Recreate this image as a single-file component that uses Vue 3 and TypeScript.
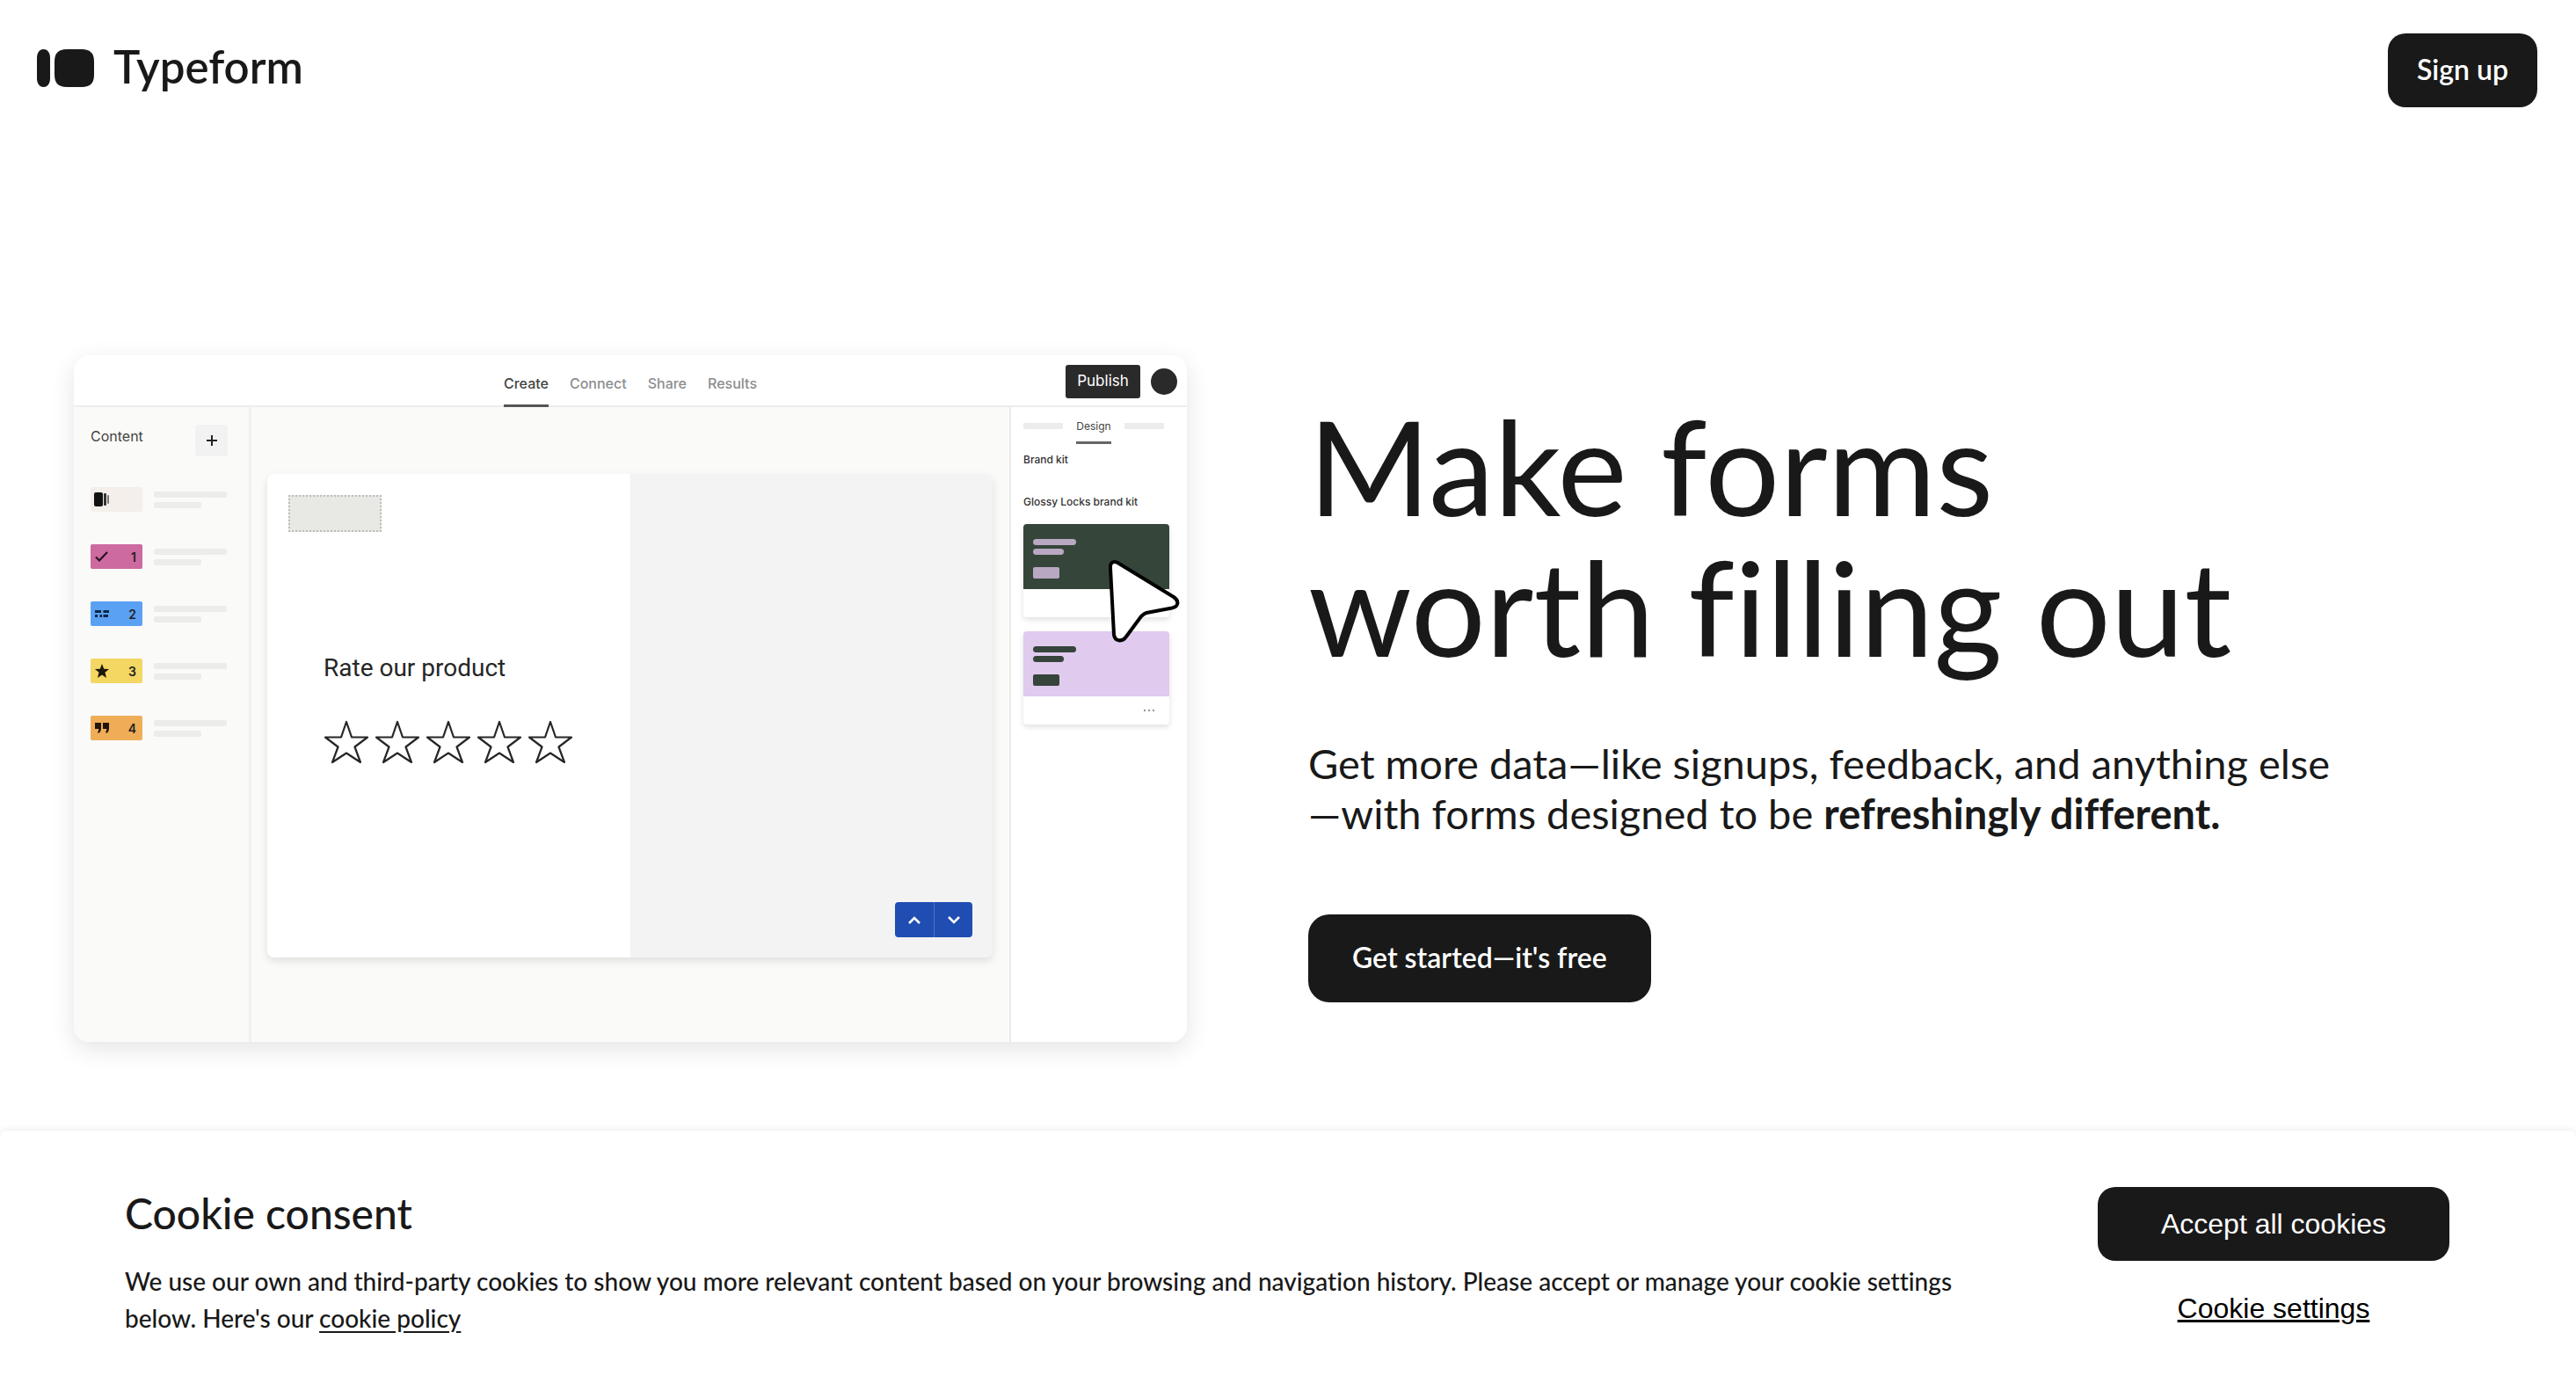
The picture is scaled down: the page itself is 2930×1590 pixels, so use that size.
<script setup lang="ts">
interface Question {
  icon: 'logo' | 'check' | 'text' | 'star' | 'quote'
  color: string
  label: string
}

interface Theme {
  name: string
  menu: boolean
}

const tabs: string[] = ['Create', 'Connect', 'Share', 'Results']

const questions: Question[] = [
  { icon: 'logo', color: '#f4efeb', label: '' },
  { icon: 'check', color: '#cd6a9f', label: '1' },
  { icon: 'text', color: '#5ba1f3', label: '2' },
  { icon: 'star', color: '#f4d662', label: '3' },
  { icon: 'quote', color: '#efad58', label: '4' },
]

const themes: Theme[] = [
  { name: 'forest', menu: false },
  { name: 'lilac', menu: true },
]
</script>

<template>
  <div class="page">
    <header class="topbar">
      <a class="brand" href="#" aria-label="Typeform home">
        <svg class="brand-mark" width="65" height="43" viewBox="0 0 65 43" aria-hidden="true">
          <path d="M7.500 0C12.500 0 15 4.500 15 10V33C15 38.500 12.500 43 7.500 43C2.500 43 0 38.500 0 33V10C0 4.500 2.500 0 7.500 0Z" />
          <path d="M34 0H51C61 0 65 5 65 14V29C65 38 61 43 51 43H34C24 43 20 38 20 29V14C20 5 24 0 34 0Z" />
        </svg>
        <span>Typeform</span>
      </a>
      <button class="btn btn-small" type="button">Sign up</button>
    </header>

    <main class="hero">
      <section class="app" aria-label="Form builder preview">
        <div class="app-head">
          <nav class="tabs">
            <button v-for="(tab, i) in tabs" :key="tab" type="button" class="tab" :class="{ active: i === 0 }">{{ tab }}</button>
          </nav>
          <div class="account">
            <button class="publish" type="button">Publish</button>
            <span class="avatar"></span>
          </div>
        </div>

        <div class="app-body">
          <aside class="sidebar">
            <div class="sidebar-head">
              <span class="sidebar-title">Content</span>
              <button class="add" type="button" aria-label="Add content">
                <svg width="12" height="12" viewBox="0 0 12 12"><path d="M6 0V12M0 6H12" stroke="#222" stroke-width="2" /></svg>
              </button>
            </div>
            <ul class="questions">
              <li v-for="q in questions" :key="q.icon" class="question">
                <span class="tile" :style="{ background: q.color }">
                  <svg width="18" height="18" viewBox="0 0 18 18" aria-hidden="true">
                    <g v-if="q.icon === 'logo'" fill="#111">
                      <rect x="0" y="1" width="10" height="16" rx="2" />
                      <rect x="11" y="2" width="3" height="14" rx="1" fill="#333" />
                      <rect x="15" y="4" width="2" height="10" rx="1" fill="#777" />
                    </g>
                    <path v-else-if="q.icon === 'check'" d="M2 9.500L6 13.500L15 4" fill="none" stroke="#2c0f20" stroke-width="2.200" />
                    <path v-else-if="q.icon === 'text'" d="M1 6.500H8M10.500 6.500H17M1 11.500H4M6.500 11.500H9M10.500 11.500H16" fill="none" stroke="#0d2745" stroke-width="2.800" />
                    <path v-else-if="q.icon === 'star'" d="M9 1L11.200 6.800L17 7L12.500 10.800L14 17L9 13.400L4 17L5.500 10.800L1 7L6.800 6.800Z" fill="#1c180a" />
                    <path v-else d="M1 3H8V9C8 12 7 14 5 15L4 13.500C5 12.500 5.300 11.500 5.300 10H1ZM10 3H17V9C17 12 16 14 14 15L13 13.500C14 12.500 14.300 11.500 14.300 10H10Z" fill="#20150a" />
                  </svg>
                  <b>{{ q.label }}</b>
                </span>
                <span class="lines"><i></i><i></i></span>
              </li>
            </ul>
          </aside>

          <div class="canvas">
            <div class="form">
              <div class="form-main">
                <div class="logo-slot"></div>
                <p class="form-title">Rate our product</p>
                <div class="stars">
                  <svg v-for="n in 5" :key="n" width="52" height="52" viewBox="0 0 52 52" aria-hidden="true">
                    <path d="M26 3L32 20.500H50L35.500 31.500L42 49L26 38.500L10 49L16.500 31.500L2 20.500H20Z" fill="none" stroke="#262626" stroke-width="2.200" stroke-linejoin="round" />
                  </svg>
                </div>
              </div>
              <div class="form-side">
                <div class="pager">
                  <button type="button" aria-label="Previous">
                    <svg width="14" height="9" viewBox="0 0 14 9"><path d="M1 8L7 2L13 8" fill="none" stroke="#fff" stroke-width="2.600" /></svg>
                  </button>
                  <button type="button" aria-label="Next">
                    <svg width="14" height="9" viewBox="0 0 14 9"><path d="M1 1L7 7L13 1" fill="none" stroke="#fff" stroke-width="2.600" /></svg>
                  </button>
                </div>
              </div>
            </div>
          </div>

          <aside class="design">
            <div class="design-tabs">
              <i></i>
              <button type="button">Design</button>
              <i></i>
            </div>
            <p class="kit-label">Brand kit</p>
            <p class="kit-name">Glossy Locks brand kit</p>
            <div v-for="t in themes" :key="t.name" class="theme" :class="t.name">
              <div class="swatch"><i></i><i></i><i></i></div>
              <div class="theme-foot">
                <svg v-if="t.menu" width="14" height="4" viewBox="0 0 14 4" fill="#999"><circle cx="2" cy="2" r="1.200" /><circle cx="7" cy="2" r="1.200" /><circle cx="12" cy="2" r="1.200" /></svg>
              </div>
            </div>
            <svg class="cursor" width="84" height="98" viewBox="0 0 84 98" aria-hidden="true">
              <path d="M5 10C4.500 3 9 1.500 14 4.500L77 43C84 48 82 54 75 55.500L46 61C43 62 42 63 40 65L23 88C18 95 10 93 9 86Z" fill="#fff" stroke="#000" stroke-width="4" stroke-linejoin="round" />
            </svg>
          </aside>
        </div>
      </section>

      <section class="pitch">
        <h1>Make forms<br />worth filling out</h1>
        <p>Get more data—like signups, feedback, and anything else<br />—with forms designed to be <strong>refreshingly different.</strong></p>
        <button class="btn btn-large" type="button">Get started—it's free</button>
      </section>
    </main>

    <section class="consent" aria-label="Cookie consent">
      <div class="consent-text">
        <h2>Cookie consent</h2>
        <p>We use our own and third-party cookies to show you more relevant content based on your browsing and navigation history. Please accept or manage your cookie settings below. Here's our <a href="#">cookie policy</a></p>
      </div>
      <div class="consent-actions">
        <button class="accept" type="button">Accept all cookies</button>
        <button class="settings" type="button">Cookie settings</button>
      </div>
    </section>
  </div>
</template>

<style>
body {
  margin: 0;
  background: #fff;
}
</style>

<style scoped>
* {
  box-sizing: border-box;
}
h1, h2, p, ul {
  margin: 0;
  padding: 0;
}
button {
  border: 0;
  padding: 0;
  background: none;
  font: inherit;
  color: inherit;
  cursor: pointer;
}
svg {
  display: block;
}
.page {
  display: flex;
  flex-direction: column;
  min-height: 100vh;
  font-family: Lato, "Open Sans", sans-serif;
  font-variant-ligatures: none;
  color: #191919;
}
.topbar {
  display: flex;
  justify-content: space-between;
  align-items: flex-start;
  padding: 38px 44px 0 42px;
}
.brand {
  display: flex;
  align-items: center;
  gap: 22px;
  height: 78px;
  color: #191919;
  font-size: 51px;
  font-weight: 600;
  line-height: 60px;
  text-decoration: none;
}
.brand span {
  padding-bottom: 2px;
}
.brand-mark {
  fill: #191919;
}
.btn {
  background: #191919;
  color: #fff;
  font-size: 32px;
  font-weight: 600;
}
.btn-small {
  height: 84px;
  padding: 0 33px 4px;
  border-radius: 20px;
}
.btn-large {
  height: 100px;
  padding: 0 50px 4px;
  border-radius: 24px;
}
.hero {
  display: grid;
  grid-template-columns: 1266fr 1358fr;
  gap: 138px;
  padding: 282px 84px 100px;
}

/* builder window */
.app {
  border-radius: 18px;
  background: #fff;
  box-shadow: 0 8px 28px rgba(0, 0, 0, 0.11);
  font-family: Inter, "Liberation Sans", sans-serif;
}
.app-head {
  display: grid;
  grid-template-columns: 1fr auto 1fr;
  height: 59px;
  border-bottom: 2px solid #ededed;
}
.tabs {
  grid-column: 2;
  display: flex;
  gap: 24px;
}
.tab {
  height: 60px;
  padding-top: 8px;
  border-bottom: 4px solid transparent;
  color: #8d8d8d;
  font-size: 16px;
  font-weight: 500;
}
.tab.active {
  border-color: #555;
  color: #444;
}
.account {
  display: flex;
  justify-content: flex-end;
  align-items: center;
  gap: 12px;
  padding: 0 11px 1px 0;
}
.publish {
  width: 85px;
  height: 38px;
  padding-bottom: 2px;
  border-radius: 3px;
  background: #2a2a2a;
  color: #fff;
  font-size: 17px;
}
.avatar {
  width: 30px;
  height: 30px;
  border-radius: 50%;
  background: #2a2a2a;
}
.app-body {
  display: grid;
  grid-template-columns: 202px 1fr 202px;
  min-height: 722px;
}
.sidebar {
  padding: 20px 24px 0 19px;
  border-right: 3px solid #f0f0ef;
  border-radius: 0 0 0 18px;
  background: #fafaf8;
}
.sidebar-head {
  display: flex;
  justify-content: space-between;
  align-items: flex-start;
}
.sidebar-title {
  padding-top: 4px;
  color: #444;
  font-size: 16px;
  line-height: 18px;
}
.add {
  display: grid;
  place-items: center;
  width: 37px;
  height: 36px;
  border-radius: 4px;
  background: #f2f2f2;
}
.questions {
  display: grid;
  gap: 37px;
  margin-top: 35px;
  list-style: none;
}
.question {
  display: flex;
  gap: 13px;
}
.tile {
  display: flex;
  align-items: center;
  justify-content: space-between;
  width: 59px;
  height: 28px;
  padding: 0 7px 0 4px;
  border-radius: 2px;
}
.tile b {
  color: #222;
  font-size: 14px;
  font-weight: 600;
}
.lines {
  display: grid;
  align-content: center;
  gap: 5px;
}
.lines i {
  width: 83px;
  height: 7px;
  border-radius: 2px;
  background: #ececeb;
}
.lines i + i {
  width: 54px;
}
.canvas {
  display: flex;
  padding: 76px 19px 96px 18px;
  background: #fafaf8;
}
.form {
  display: grid;
  grid-template-columns: 1fr 1fr;
  flex: 1;
  border-radius: 8px;
  box-shadow: 0 4px 10px rgba(0, 0, 0, 0.11);
}
.form-main {
  padding: 24px;
  border-radius: 8px 0 0 8px;
  background: #fff;
}
.logo-slot {
  width: 106px;
  height: 42px;
  border: 2px dotted #bdbdbb;
  background: #e8e8e4;
}
.form-title {
  margin: 137px 0 0 40px;
  color: #262626;
  font-family: Roboto, Inter, sans-serif;
  font-size: 28px;
  line-height: 36px;
}
.stars {
  display: flex;
  gap: 6px;
  margin: 40px 0 0 40px;
}
.form-side {
  display: flex;
  justify-content: flex-end;
  align-items: flex-end;
  padding: 23px;
  border-radius: 0 8px 8px 0;
  background: #f3f3f3;
}
.pager {
  display: flex;
  border-radius: 4px;
  background: #1f4db2;
}
.pager button {
  display: grid;
  place-items: center;
  width: 44px;
  height: 40px;
}
.pager button + button {
  border-left: 1px solid #4a72c9;
}
.design {
  position: relative;
  padding: 14px 20px 0 14px;
  border-left: 2px solid #ececec;
  border-radius: 0 0 18px 0;
  background: #fff;
}
.design-tabs {
  display: flex;
  justify-content: space-between;
  padding-right: 6px;
}
.design-tabs i {
  width: 45px;
  height: 7px;
  margin-top: 4px;
  background: #ececec;
}
.design-tabs button {
  height: 28px;
  padding-bottom: 10px;
  border-bottom: 3px solid #666;
  color: #444;
  font-size: 12px;
  line-height: 15px;
}
.kit-label,
.kit-name {
  color: #333;
  font-size: 12px;
  font-weight: 500;
  line-height: 16px;
  white-space: nowrap;
}
.kit-label {
  margin-top: 10px;
}
.kit-name {
  margin: 32px 0 17px;
}
.theme {
  margin-bottom: 16px;
  border-radius: 4px;
  box-shadow: 0 3px 6px rgba(0, 0, 0, 0.12);
}
.swatch {
  display: grid;
  align-content: start;
  gap: 4px;
  height: 74px;
  padding: 17px 11px;
  border-radius: 4px 4px 0 0;
}
.swatch i {
  width: 49px;
  height: 7px;
  border-radius: 4px;
}
.swatch i:nth-child(2) {
  width: 35px;
}
.swatch i:nth-child(3) {
  width: 30px;
  height: 13px;
  margin-top: 10px;
  border-radius: 2px;
}
.forest .swatch {
  background: #354539;
}
.forest i {
  background: #b8a8c2;
}
.lilac .swatch {
  background: #e0caee;
}
.lilac i {
  background: #36443b;
}
.theme-foot {
  display: flex;
  justify-content: flex-end;
  align-items: center;
  height: 32px;
  padding-right: 16px;
}
.cursor {
  position: absolute;
  top: 173px;
  right: 8px;
}

/* headline column */
.pitch {
  padding-top: 45px;
}
h1 {
  font-size: 150px;
  font-weight: 400;
  line-height: 160px;
}
.pitch p {
  margin-top: 71px;
  font-size: 47px;
  line-height: 57px;
}
.pitch .btn {
  margin-top: 86px;
}

/* cookie banner */
.consent {
  display: flex;
  justify-content: space-between;
  margin-top: auto;
  min-height: 304px;
  padding: 64px 144px 0 142px;
  border-radius: 8px 8px 0 0;
  background: #fff;
  box-shadow: 0 0 10px rgba(0, 0, 0, 0.1);
}
.consent-text {
  flex: 0 1 2110px;
}
h2 {
  font-size: 48px;
  font-weight: 500;
  line-height: 60px;
}
.consent p {
  margin-top: 26px;
  font-size: 28px;
  font-weight: 500;
  line-height: 42px;
}
.consent a {
  color: inherit;
  text-underline-offset: 4px;
}
.consent-actions {
  display: flex;
  flex-direction: column;
  align-items: center;
  width: 400px;
  font-family: "Liberation Sans", Arial, sans-serif;
  font-size: 32px;
}
.accept {
  width: 100%;
  height: 84px;
  border-radius: 20px;
  background: #191919;
  color: #fff;
}
.settings {
  margin-top: 34px;
  color: #000;
  line-height: 40px;
  text-decoration: underline;
  text-decoration-thickness: 3px;
}
</style>
